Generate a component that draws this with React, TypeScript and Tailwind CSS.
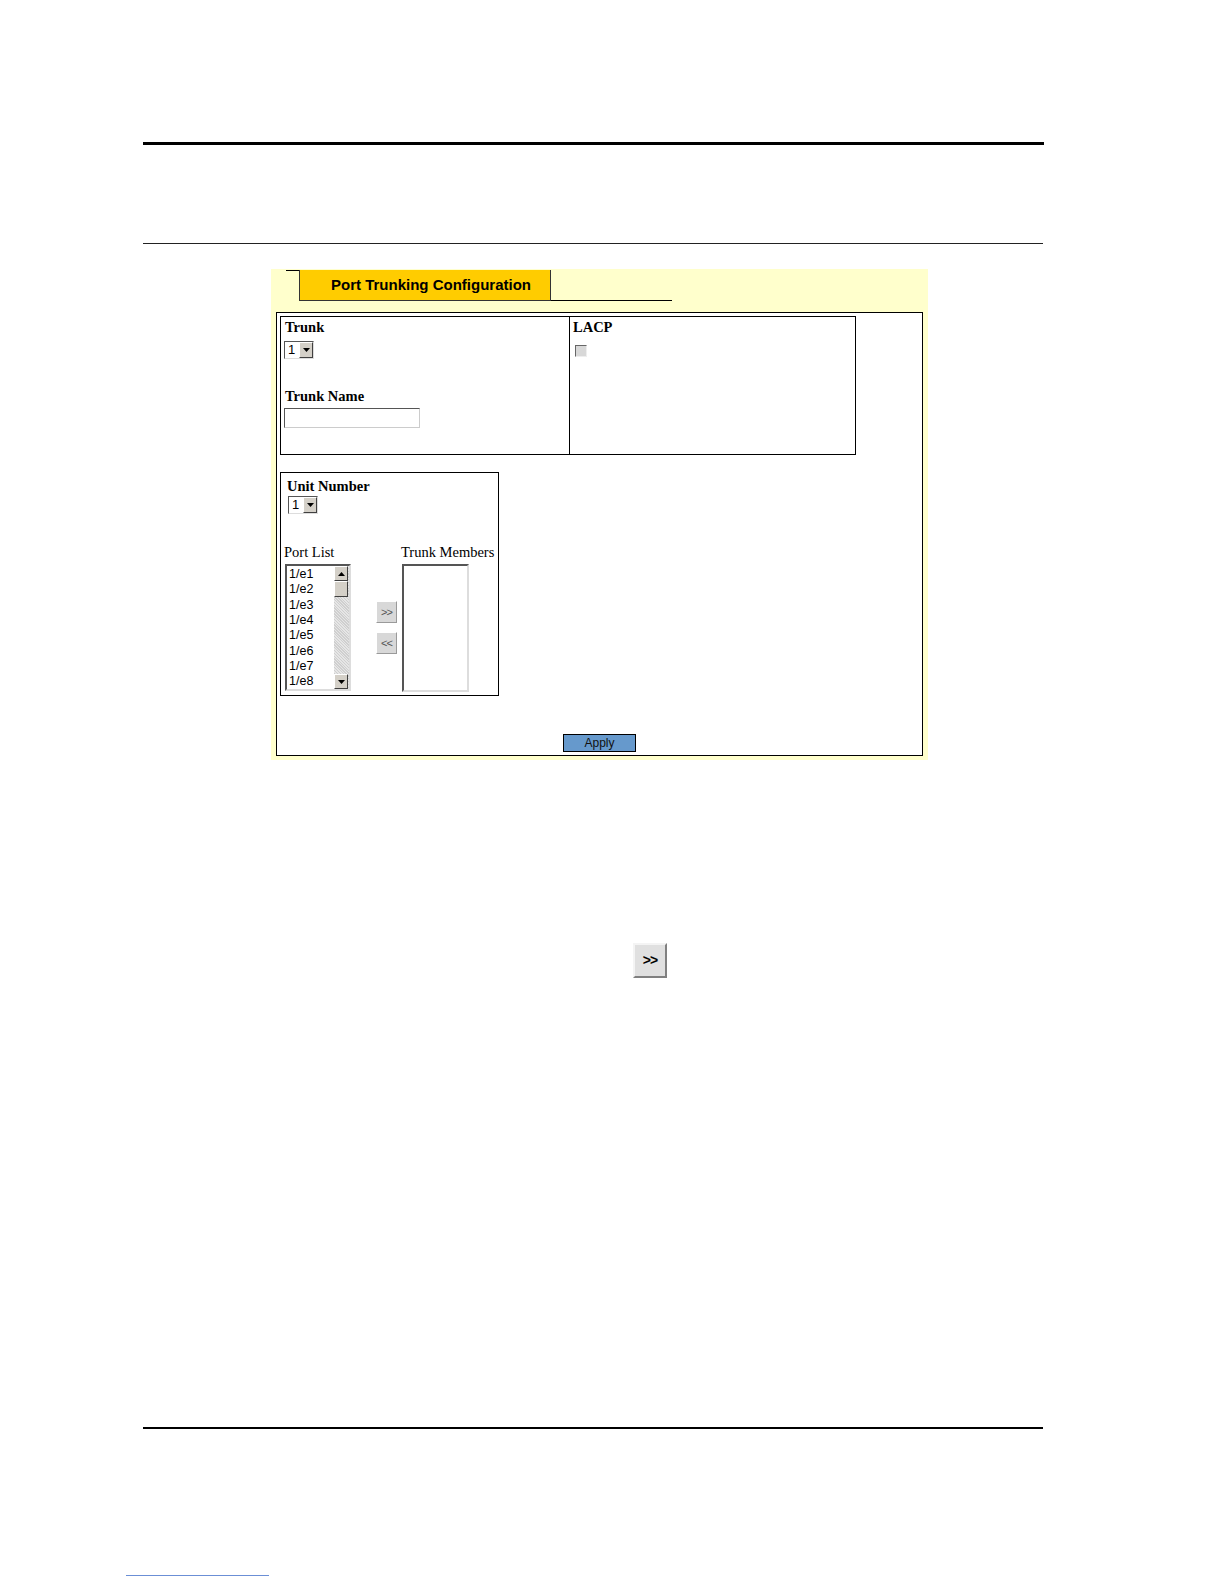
import React from "react";

const ports = ["1/e1", "1/e2", "1/e3", "1/e4", "1/e5", "1/e6", "1/e7", "1/e8"];

function Select({ value }: { value: string }) {
  return (
    <div className="flex w-[30px] h-[18px] border border-t-[#555] border-l-[#555] border-b-[#ddd] border-r-[#ddd] bg-white">
      <div className="flex-1 pl-[3px] text-[13px] leading-[16px] font-['Liberation_Sans',sans-serif] text-black">{value}</div>
      <div className="w-[14px] h-full bg-[#d4d0c8] border border-t-white border-l-white border-b-[#404040] border-r-[#404040] flex items-center justify-center">
        <svg width="7" height="4" viewBox="0 0 7 4"><path d="M0 0h7L3.5 4z" fill="#000" /></svg>
      </div>
    </div>
  );
}

function ArrowBtn({ label }: { label: string }) {
  return (
    <div className="w-[21px] h-[22px] bg-[#d8d8d8] border border-t-white border-l-white border-b-[#9a9a9a] border-r-[#9a9a9a] flex items-center justify-center text-[11px] text-[#555] font-['Liberation_Sans',sans-serif] tracking-[-1px]">
      {label}
    </div>
  );
}

function ScrollArrow({ up }: { up: boolean }) {
  return (
    <div className="w-[14px] h-[15px] bg-[#d4d0c8] border border-t-white border-l-white border-b-[#404040] border-r-[#404040] flex items-center justify-center">
      <svg width="7" height="4" viewBox="0 0 7 4">
        <path d={up ? "M0 4h7L3.5 0z" : "M0 0h7L3.5 4z"} fill="#000" />
      </svg>
    </div>
  );
}

export default function App() {
  return (
    <div className="w-full h-[1584px] bg-white font-['Liberation_Serif',serif] text-black overflow-hidden">
      {/* header rules */}
      <div className="pt-[142px] pl-[143px]">
        <div className="w-[901px] h-[3px] bg-black" />
        <div className="h-[98px]" />
        <div className="w-[900px] h-px bg-[#222]" />
      </div>

      {/* config panel */}
      <div className="ml-[271px] mt-[25px] w-[657px] h-[491px] bg-[#ffffcc] flex flex-col">
        <div className="h-[43px] pt-px flex items-start">
          <div className="ml-[15px] w-[13px] h-px bg-black" />
          <div className="w-[252px] h-[31px] bg-[#ffcc00] border-l border-r border-b border-[#333] pl-[31px] flex items-center">
            <span className="font-['Liberation_Sans',sans-serif] font-bold text-[15px] text-black">Port Trunking Configuration</span>
          </div>
          <div className="mt-[30px] w-[121px] h-px bg-black" />
        </div>

        <div className="ml-[5px] w-[647px] h-[444px] bg-white border border-black flex flex-col pl-[3px] pt-[3px]">
          {/* trunk / lacp table */}
          <div className="flex w-[576px] h-[139px] border border-black">
            <div className="w-[289px] border-r border-black pl-[3px] pt-[1px]">
              <div className="font-bold text-[14.5px] leading-[18px] pl-px">Trunk</div>
              <div className="mt-[5px]"><Select value="1" /></div>
              <div className="mt-[28px] font-bold text-[14.5px] leading-[18px] pl-px">Trunk Name</div>
              <div className="mt-[3px] w-[136px] h-[20px] bg-white border border-t-[#555] border-l-[#555] border-b-[#ccc] border-r-[#ccc]" />
            </div>
            <div className="flex-1 pl-[3px] pt-[1px]">
              <div className="font-bold text-[14.5px] leading-[18px]">LACP</div>
              <div className="mt-[9px] ml-[2px] w-[12px] h-[12px] bg-[#d8d8d8] border border-t-[#666] border-l-[#666] border-b-[#eee] border-r-[#eee]" />
            </div>
          </div>

          {/* unit / ports table */}
          <div className="mt-[17px] w-[219px] h-[224px] border border-black flex flex-col pl-[3px]">
            <div className="pl-[3px] pt-[4px] font-bold text-[14.5px] leading-[18px]">Unit Number</div>
            <div className="ml-[4px] mt-[1px]"><Select value="1" /></div>
            <div className="mt-[29px] flex text-[14.5px] leading-[18px]">
              <div className="w-[117px]">Port List</div>
              <div>Trunk Members</div>
            </div>
            <div className="mt-[3px] flex items-start">
              <div className="ml-px w-[66px] h-[127px] border-2 border-t-[#555] border-l-[#555] border-b-[#ddd] border-r-[#ddd] bg-white flex">
                <div className="flex-1 pl-[2px] pt-[1px] font-['Liberation_Sans',sans-serif] text-[12.5px] leading-[15.35px]">
                  {ports.map((p) => (
                    <div key={p}>{p}</div>
                  ))}
                </div>
                <div className="w-[15px] h-full flex flex-col bg-[repeating-linear-gradient(45deg,#e6e6e6_0px,#e6e6e6_1px,#cfcfcf_1px,#cfcfcf_2px)]">
                  <ScrollArrow up />
                  <div className="w-[14px] h-[16px] bg-[#d4d0c8] border border-t-white border-l-white border-b-[#404040] border-r-[#404040]" />
                  <div className="flex-1" />
                  <ScrollArrow up={false} />
                </div>
              </div>
              <div className="ml-[25px] mt-[37px] flex flex-col gap-[9px]">
                <ArrowBtn label=">>" />
                <ArrowBtn label="<<" />
              </div>
              <div className="ml-[5px] w-[67px] h-[128px] border-2 border-t-[#555] border-l-[#555] border-b-[#ddd] border-r-[#ddd] bg-white" />
            </div>
          </div>

          <div className="flex-1" />
          <div className="flex justify-center pr-[3px] mb-[3px]">
            <div className="w-[73px] h-[18px] bg-[#6699cc] border border-black flex items-center justify-center font-['Liberation_Sans',sans-serif] text-[12px] text-[#111]">
              Apply
            </div>
          </div>
        </div>
      </div>

      {/* large add button */}
      <div className="ml-[633px] mt-[183px] w-[34px] h-[35px] bg-[#e0e0e0] border-2 border-t-[#f4f4f4] border-l-[#f4f4f4] border-b-[#808080] border-r-[#808080] flex items-center justify-center font-['Liberation_Sans',sans-serif] font-bold text-[14px] tracking-[-1px] text-black">
        &gt;&gt;
      </div>

      {/* footer rules */}
      <div className="mt-[449px] ml-[143px] w-[900px] h-[2px] bg-black" />
      <div className="mt-[146px] ml-[126px] w-[143px] h-px bg-[#6b8fd6]" />
    </div>
  );
}
